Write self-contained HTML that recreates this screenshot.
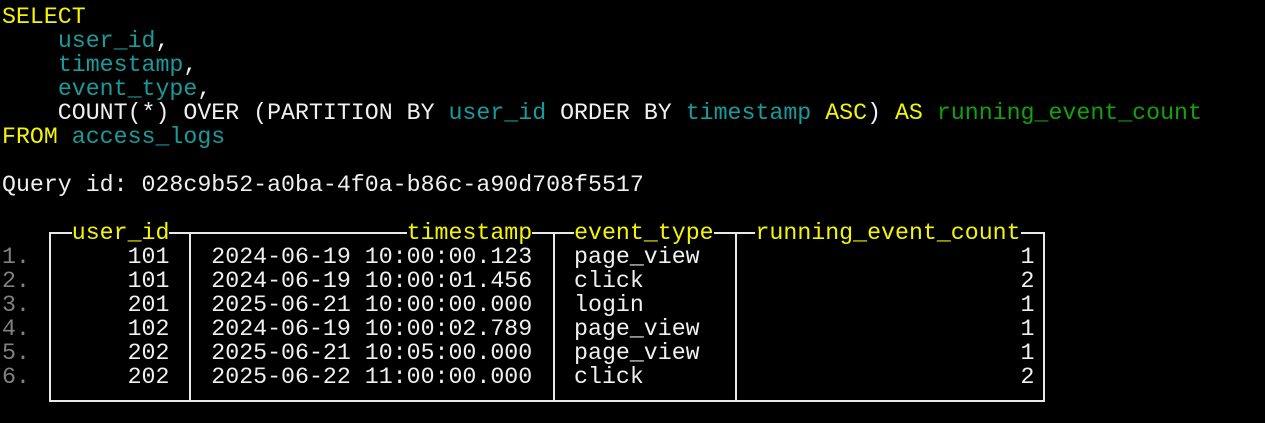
<!DOCTYPE html>
<html><head><style>
html,body{margin:0;padding:0;background:#000;width:1265px;height:423px;overflow:hidden}
pre{position:absolute;left:2px;top:5px;margin:0;font-family:"Liberation Mono",monospace;font-size:23.25px;line-height:24px;color:#f0f0f0;z-index:2}
.y{color:#f5f500}.c{color:#1a9a9a}.g{color:#13a10e}.n{color:#808080}
.h{color:#f5f500;background:#000}
.b{position:absolute;background:#e8e8e8;z-index:1}
</style></head><body>
<div class="b" style="left:49px;top:232px;width:996px;height:2px"></div>
<div class="b" style="left:49px;top:400px;width:996px;height:2px"></div>
<div class="b" style="left:49px;top:232px;width:2px;height:170px"></div>
<div class="b" style="left:189px;top:232px;width:2px;height:170px"></div>
<div class="b" style="left:553px;top:232px;width:2px;height:170px"></div>
<div class="b" style="left:735px;top:232px;width:2px;height:170px"></div>
<div class="b" style="left:1043px;top:232px;width:2px;height:170px"></div>
<pre><span class="y">SELECT</span>
    <span class="c">user_id</span>,
    <span class="c">timestamp</span>,
    <span class="c">event_type</span>,
    COUNT(*) OVER (PARTITION BY <span class="c">user_id</span> ORDER BY <span class="c">timestamp</span> <span class="y">ASC</span>) <span class="y">AS</span> <span class="g">running_event_count</span>
<span class="y">FROM</span> <span class="c">access_logs</span>

Query id: 028c9b52-a0ba-4f0a-b86c-a90d708f5517

     <span class="h">user_id</span>                 <span class="h">timestamp</span>   <span class="h">event_type</span>   <span class="h">running_event_count</span>
<span class="n">1.</span>       101   2024-06-19 10:00:00.123   page_view                       1
<span class="n">2.</span>       101   2024-06-19 10:00:01.456   click                           2
<span class="n">3.</span>       201   2025-06-21 10:00:00.000   login                           1
<span class="n">4.</span>       102   2024-06-19 10:00:02.789   page_view                       1
<span class="n">5.</span>       202   2025-06-21 10:05:00.000   page_view                       1
<span class="n">6.</span>       202   2025-06-22 11:00:00.000   click                           2
</pre>
</body></html>
